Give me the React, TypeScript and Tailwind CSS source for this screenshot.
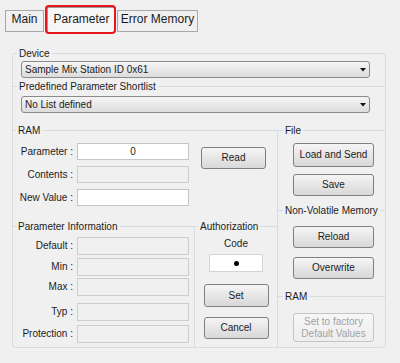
import clsx from "clsx";
import { ReactNode } from "react";

const LINE = "border-[#d6dce3]";

const Legend = ({ label, className }: { label: string; className?: string }) => (
    <div className={clsx("-mt-[7px] h-[13px] flex items-center", className)}>
        <span className="bg-[#f0f0f0] px-[2px] leading-[13px]">{label}</span>
    </div>
);

const Btn = ({ children, className, disabled }: { children: ReactNode; className?: string; disabled?: boolean }) => (
    <button
        className={clsx(
            "flex items-center justify-center border rounded-[3px] bg-linear-to-b text-[10px] leading-[12px] text-center",
            disabled
                ? "border-[#c4c4c4] from-[#f6f6f6] to-[#eeeeee] text-[#a2a2a2]"
                : "border-[#7f7f7f] from-[#f5f5f5] to-[#d8d8d8] text-[#1c1c1c]",
            className
        )}
    >
        {children}
    </button>
);

const Select = ({ text, className }: { text: string; className?: string }) => (
    <div className={clsx("w-[349px] h-[17px] flex items-center justify-between border border-[#8a8a8a] rounded-[3px] bg-linear-to-b from-[#f5f5f5] to-[#dcdcdc] pl-[3px] pr-[3px]", className)}>
        <span className="leading-[12px]">{text}</span>
        <svg width="6" height="4" viewBox="0 0 6 4"><path d="M0 0H6L3 3.5Z" fill="#111" /></svg>
    </div>
);

const Field = ({ value, disabled, className }: { value?: string; disabled?: boolean; className?: string }) => (
    <input
        readOnly
        value={value ?? ""}
        className={clsx(
            "border text-center text-[10px] outline-none",
            disabled ? "border-[#cdcdcd] bg-[#f0f0f0]" : "border-[#c4c4c4] bg-white",
            className
        )}
    />
);

const Row = ({ label, className, children }: { label: string; className?: string; children: ReactNode }) => (
    <div className={clsx("flex items-center", className)}>
        <span className="w-[60px] mr-[4px] text-right leading-[12px]">{label}</span>
        {children}
    </div>
);

export default function App() {
    return (
        <div className="w-[400px] h-[363px] bg-[#f0f0f0] font-['Liberation_Sans',Arial,sans-serif] text-[10px] text-[#1c1c1c] overflow-hidden">
            {/* tabs */}
            <div className="flex items-end h-[32px] pl-[5px] text-[12px] leading-[14px]">
                <div className="w-[39px] h-[22px] pt-[1px] text-center border border-[#a8a8a8] bg-[#f0f0f0]">Main</div>
                <div className="relative ml-[3px] w-[69px] h-[25px] pt-[4px] text-center border border-b-0 border-[#9a9a9a] bg-[#f6f6f6]">
                    Parameter
                    <div className="absolute -left-[3px] -top-[3px] -right-px -bottom-[2px] border-2 border-[#e5161c] rounded-[4px]" />
                </div>
                <div className="ml-px w-[81px] h-[22px] pt-[1px] text-center border border-[#a8a8a8] bg-[#f0f0f0]">Error Memory</div>
            </div>

            {/* main frame */}
            <div className={clsx("ml-[12px] mt-[21px] w-[374px] border rounded-[3px]", LINE)}>
                <Legend label="Device" className="ml-[4px]" />
                <Select className="ml-[8px] mt-[1px]" text="Sample Mix Station ID 0x61" />

                <div className={clsx("mt-[8px] border-t", LINE)}>
                    <Legend label="Predefined Parameter Shortlist" className="ml-[4px]" />
                    <Select className="ml-[8px] mt-[3px]" text="No List defined" />
                </div>

                <div className="mt-[17px] flex">
                    {/* left column */}
                    <div className={clsx("w-[264px] border-t", LINE)}>
                        <Legend label="RAM" className="ml-[3px]" />
                        <div className="flex mt-[6px]">
                            <div className="flex flex-col gap-[6px]">
                                <Row label="Parameter :"><Field value="0" className="w-[112px] h-[17px]" /></Row>
                                <Row label="Contents :"><Field disabled className="w-[112px] h-[17px]" /></Row>
                                <Row label="New Value :"><Field className="w-[112px] h-[17px]" /></Row>
                            </div>
                            <Btn className="ml-[12px] mt-[4px] w-[65px] h-[22px]">Read</Btn>
                        </div>

                        <div className="mt-[20px] flex">
                            <div className={clsx("w-[181px] border-t pb-[4px]", LINE)}>
                                <Legend label="Parameter Information" className="ml-[3px]" />
                                <Row label="Default :" className="mt-[4px]"><Field disabled className="w-[112px] h-[18px]" /></Row>
                                <Row label="Min :" className="mt-[3px]"><Field disabled className="w-[112px] h-[18px]" /></Row>
                                <Row label="Max :" className="mt-[2px]"><Field disabled className="w-[112px] h-[18px]" /></Row>
                                <Row label="Typ :" className="mt-[7px]"><Field disabled className="w-[112px] h-[18px]" /></Row>
                                <Row label="Protection :" className="mt-[4px]"><Field disabled className="w-[112px] h-[18px]" /></Row>
                            </div>
                            <div className={clsx("flex-1 border-t border-l", LINE)}>
                                <Legend label="Authorization" className="ml-[3px]" />
                                <div className="flex flex-col items-center">
                                    <span className="mt-[5px] leading-[12px]">Code</span>
                                    <div className="mt-[4px] w-[54px] h-[18px] flex items-center justify-center border border-[#d3d3d3] bg-white">
                                        <span className="w-[5px] h-[5px] rounded-full bg-black" />
                                    </div>
                                    <Btn className="mt-[12px] w-[65px] h-[23px]">Set</Btn>
                                    <Btn className="mt-[10px] w-[65px] h-[22px]">Cancel</Btn>
                                </div>
                            </div>
                        </div>
                    </div>

                    {/* right column */}
                    <div className={clsx("flex-1 border-t border-l", LINE)}>
                        <Legend label="File" className="ml-[5px]" />
                        <Btn className="ml-[15px] mt-[6px] w-[81px] h-[24px]">Load and Send</Btn>
                        <Btn className="ml-[15px] mt-[7px] w-[81px] h-[22px]">Save</Btn>

                        <div className={clsx("mt-[14px] border-t", LINE)}>
                            <Legend label="Non-Volatile Memory" className="ml-[5px]" />
                            <Btn className="ml-[15px] mt-[9px] w-[81px] h-[22px]">Reload</Btn>
                            <Btn className="ml-[15px] mt-[9px] w-[81px] h-[22px]">Overwrite</Btn>
                        </div>

                        <div className={clsx("mt-[17px] border-t", LINE)}>
                            <Legend label="RAM" className="ml-[5px]" />
                            <Btn disabled className="ml-[15px] mt-[10px] w-[81px] h-[29px]">
                                Set to factory<br />Default Values
                            </Btn>
                        </div>
                    </div>
                </div>
            </div>
        </div>
    );
}
